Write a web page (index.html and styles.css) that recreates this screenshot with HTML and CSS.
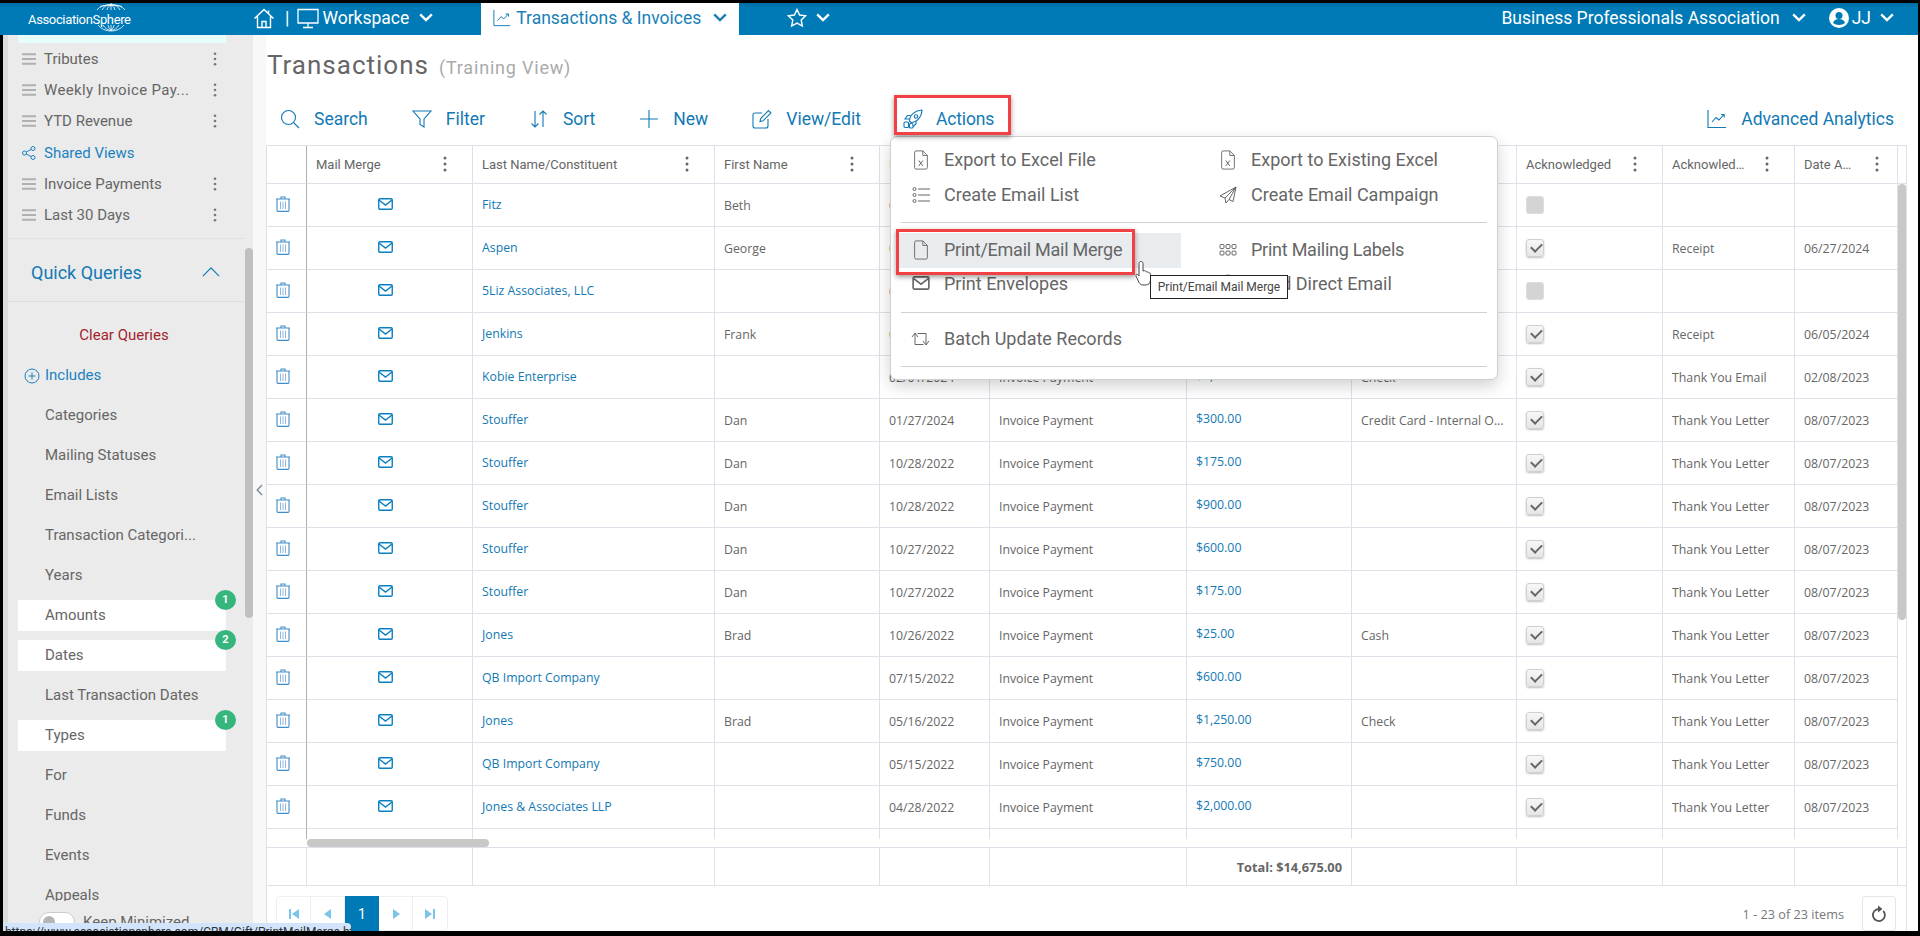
FILE: index.html
```html
<!DOCTYPE html>
<html lang="en">
<head>
<meta charset="utf-8">
<title>Transactions</title>
<link rel="stylesheet" href="styles.css">
</head>
<body>
<svg class="sprite" aria-hidden="true">
  <symbol id="i-trash" viewBox="0 0 14 16"><path d="M0 3h14M5 3V1h4V3M1 3v11.200c0 .6.4 1.200 1 1.200h10c.6 0 1-.6 1-1.200V3" fill="none" stroke="#3f8ecb" stroke-width="1.100"/><path d="M4.500 5.500v7.500M7 5.500v7.500M9.500 5.500v7.500" stroke="#8fb6dc" stroke-width="1"/></symbol>
  <symbol id="i-mail" viewBox="0 0 15 12"><rect x=".75" y=".75" width="13.5" height="10.5" rx="1.2" fill="none" stroke="currentColor" stroke-width="1.4"/><path d="M1 2l6.500 5L14 2" fill="none" stroke="currentColor" stroke-width="1.4"/></symbol>
  <symbol id="i-chev" viewBox="0 0 14 9"><path d="M1.200 1.400L7 7l5.800-5.600" fill="none" stroke="currentColor" stroke-width="2.400"/></symbol>
  <symbol id="i-chart" viewBox="0 0 20 20"><path d="M1 1v17.500h18" fill="none" stroke="currentColor" stroke-width="1.100"/><path d="M5 13l4-4.500 3 2.500 5-5.500M14 5.500h3.200v3" fill="none" stroke="currentColor" stroke-width="1.100"/></symbol>
  <symbol id="i-xls" viewBox="0 0 16 22"><path d="M1 2.500c0-.8.6-1.500 1.500-1.500H10l5 5v13.500c0 .8-.6 1.500-1.500 1.500h-11C1.600 21 1 20.300 1 19.500zM10 1v5h5" fill="none" stroke="#666" stroke-width="1"/><path d="M5.500 11.500l4.500 6M10 11.500l-4.500 6" stroke="#666" stroke-width="1.100"/></symbol>
  <symbol id="i-doc" viewBox="0 0 16 22"><path d="M1 2.500c0-.8.6-1.500 1.500-1.500H10l5 5v13.500c0 .8-.6 1.500-1.500 1.500h-11C1.600 21 1 20.300 1 19.500zM10 1v5h5" fill="none" stroke="#666" stroke-width="1"/></symbol>
  <symbol id="i-dots" viewBox="0 0 4 16"><circle cx="2" cy="2" r="1.500"/><circle cx="2" cy="8" r="1.500"/><circle cx="2" cy="14" r="1.500"/></symbol>
  <symbol id="i-burger" viewBox="0 0 14 12"><path d="M0 1.200h14M0 6h14M0 10.800h14" stroke="#b0b0b0" stroke-width="2"/></symbol>
  <symbol id="i-first" viewBox="0 0 12 12"><path d="M1 1h2v10H1zM11 1v10L4 6z"/></symbol>
  <symbol id="i-prev" viewBox="0 0 12 12"><path d="M9 1v10L2 6z"/></symbol>
  <symbol id="i-next" viewBox="0 0 12 12"><path d="M3 1v10l7-5z"/></symbol>
  <symbol id="i-last" viewBox="0 0 12 12"><path d="M1 1v10l7-5zM9 1h2v10H9z"/></symbol>
</svg>

<div class="frame">
  <header class="topbar">
    <div class="logo">
      <svg class="logo-globe" viewBox="0 0 38 30" aria-hidden="true"><g fill="none" stroke="#fff" stroke-width=".8"><path d="M5 8C9 1 29 1 33 8M10 8C13 1 25 1 28 8M15 8C16 2 22 2 23 8M19 1v7M8 4.500c6-2 16-2 22 0M6 23c6 8 20 8 26 0M11 23c4 7 12 7 16 0M16 23c1 6 5 6 6 0M19 23v6"/></g></svg>
      <span class="logo-text">AssociationSphere</span>
    </div>
    <svg class="ic-home" viewBox="0 0 22 22" aria-hidden="true"><path d="M1.500 11.500L11 2.500l9.500 9M15.500 3.500v3.500M4.500 9.500V20.500h13V9.500M9 20.500v-6h4v6" fill="none" stroke="#fff" stroke-width="1.400"/></svg>
    <span class="bar-sep">|</span>
    <svg class="ic-monitor" viewBox="0 0 22 22" aria-hidden="true"><path d="M1 2.500h20v13.500H1zM11 16v4M6 20.500h10" fill="none" stroke="#fff" stroke-width="1.300"/></svg>
    <span class="bar-label bar-work">Workspace</span>
    <svg class="chev chev-work"><use href="#i-chev"/></svg>
    <div class="tab">
      <svg class="tab-ic"><use href="#i-chart"/></svg>
      <span class="tab-label">Transactions &amp; Invoices</span>
      <svg class="chev chev-tab"><use href="#i-chev"/></svg>
    </div>
    <svg class="ic-star" viewBox="0 0 20 20" aria-hidden="true"><path d="M10 1.500l2.600 5.500 6 .8-4.400 4.200 1.100 6L10 15.100 4.700 18l1.100-6L1.400 7.800l6-.8z" fill="none" stroke="#fff" stroke-width="1.400"/></svg>
    <svg class="chev chev-star"><use href="#i-chev"/></svg>
    <span class="bar-label bar-org">Business Professionals Association</span>
    <svg class="chev chev-org"><use href="#i-chev"/></svg>
    <svg class="ic-user" viewBox="0 0 20 20" aria-hidden="true"><circle cx="10" cy="10" r="10" fill="#fff"/><circle cx="10" cy="7.500" r="3.500" fill="#007ab6"/><path d="M4 15c1-3 3-4 6-4s5 1 6 4c-3 2.500-9 2.500-12 0z" fill="#007ab6"/></svg>
    <span class="bar-label bar-jj">JJ</span>
    <svg class="chev chev-jj"><use href="#i-chev"/></svg>
  </header>

  <div class="main">
    <aside class="sidebar">
      <div class="side-body">
        <div class="view-current"></div>
        <div class="view"><svg class="burger"><use href="#i-burger"/></svg><span class="view-name">Tributes</span><svg class="kebab-s"><use href="#i-dots"/></svg></div>
        <div class="view"><svg class="burger"><use href="#i-burger"/></svg><span class="view-name view-wide">Weekly Invoice Pay...</span><svg class="kebab-s"><use href="#i-dots"/></svg></div>
        <div class="view"><svg class="burger"><use href="#i-burger"/></svg><span class="view-name">YTD Revenue</span><svg class="kebab-s"><use href="#i-dots"/></svg></div>
        <div class="view view-shared">
          <svg class="burger" viewBox="0 0 14 14" aria-hidden="true"><g fill="none" stroke="#1b82c0" stroke-width="1"><circle cx="2.500" cy="7" r="2"/><circle cx="11" cy="2.500" r="2"/><circle cx="11" cy="11.500" r="2"/><path d="M4.300 6l4.900-2.600M4.300 8l4.900 2.600"/></g></svg>
          <span class="view-name">Shared Views</span>
        </div>
        <div class="view"><svg class="burger"><use href="#i-burger"/></svg><span class="view-name">Invoice Payments</span><svg class="kebab-s"><use href="#i-dots"/></svg></div>
        <div class="view"><svg class="burger"><use href="#i-burger"/></svg><span class="view-name">Last 30 Days</span><svg class="kebab-s"><use href="#i-dots"/></svg></div>

        <div class="qq-head">
          <span class="qq-title">Quick Queries</span>
          <svg class="qq-chev" viewBox="0 0 20 11" aria-hidden="true"><path d="M1 10l9-9 9 9" fill="none" stroke="#0a7ab5" stroke-width="1.300"/></svg>
        </div>
        <div class="queries">
          <div class="q-clear">Clear Queries</div>
          <div class="q q-includes">
            <svg class="q-plus" viewBox="0 0 16 16" aria-hidden="true"><circle cx="8" cy="8" r="7" fill="none" stroke="#1b82c0" stroke-width="1"/><path d="M8 4.500v7M4.500 8h7" stroke="#1b82c0" stroke-width="1"/></svg>
            Includes
          </div>
          <div class="q">Categories</div>
          <div class="q">Mailing Statuses</div>
          <div class="q">Email Lists</div>
          <div class="q">Transaction Categori...</div>
          <div class="q">Years</div>
          <div class="q q-on">Amounts<span class="badge">1</span></div>
          <div class="q q-on">Dates<span class="badge">2</span></div>
          <div class="q">Last Transaction Dates</div>
          <div class="q q-on">Types<span class="badge">1</span></div>
          <div class="q">For</div>
          <div class="q">Funds</div>
          <div class="q">Events</div>
          <div class="q">Appeals</div>
        </div>
        <div class="keep"><span class="toggle"><span class="toggle-knob"></span></span><span>Keep Minimized</span></div>
      </div>
      <div class="side-rail"><div class="side-thumb"></div></div>
      <div class="side-gutter"><svg class="gutter-chev" viewBox="0 0 7 12" aria-hidden="true"><path d="M6 1L1.200 6 6 11" fill="none" stroke="#7d8a96" stroke-width="1.400"/></svg></div>
    </aside>

    <section class="content">
      <div class="title-row"><h1 class="title">Transactions</h1><span class="subtitle">(Training View)</span></div>

      <div class="toolbar">
        <div class="tool"><svg class="tool-ic" viewBox="0 0 20 20" aria-hidden="true"><circle cx="8.500" cy="8.500" r="7" fill="none" stroke="currentColor" stroke-width="1.100"/><path d="M13.500 13.500l5.500 5.500" stroke="currentColor" stroke-width="1.100"/></svg>Search</div>
        <div class="tool"><svg class="tool-ic" viewBox="0 0 20 20" aria-hidden="true"><path d="M1 2h18l-7 8v8l-4-2.500V10z" fill="none" stroke="currentColor" stroke-width="1.100"/></svg>Filter</div>
        <div class="tool"><svg class="tool-ic" viewBox="0 0 20 20" aria-hidden="true"><path d="M6 2v16M2.500 14.500L6 18l3.500-3.500M14 18V2M10.500 5.500L14 2l3.500 3.500" fill="none" stroke="currentColor" stroke-width="1.100"/></svg>Sort</div>
        <div class="tool"><svg class="tool-ic" viewBox="0 0 20 20" aria-hidden="true"><path d="M10 1v18M1 10h18" stroke="currentColor" stroke-width="1.100"/></svg>New</div>
        <div class="tool"><svg class="tool-ic" viewBox="0 0 20 20" aria-hidden="true"><path d="M10 4H3c-1 0-2 1-2 2v11c0 1 1 2 2 2h11c1 0 2-1 2-2v-7M8 12.500l.7-3L16.500 1.500l2.500 2.500-8 7.800z" fill="none" stroke="currentColor" stroke-width="1.100"/></svg>View/Edit</div>
        <div class="tool tool-actions"><svg class="tool-ic" viewBox="0 0 20 20" aria-hidden="true"><g fill="none" stroke="currentColor" stroke-width="1.100"><path d="M6.500 12C6.500 6 12 1.500 19 1c-.3 7-5 12.500-11 12.500z"/><circle cx="13" cy="7.500" r="1.700"/><path d="M7.500 6.500H4.500L2 10h5M13 12v3l-3 2.500"/><rect x="1" y="13" width="4.500" height="5.500" rx="1"/><rect x="6.500" y="14.500" width="3.500" height="4.500" rx="1"/></g></svg>Actions</div>
        <div class="tool tool-right"><svg class="tool-ic"><use href="#i-chart"/></svg>Advanced Analytics</div>
      </div>

      <div class="grid">
        <div class="grid-main">
          <table class="tbl">
            <colgroup><col class="c1"><col class="c2"><col class="c3"><col class="c4"><col class="c5"><col class="c6"><col class="c7"><col class="c8"><col class="c9"><col class="c10"><col class="c11"><col class="c12"></colgroup>
            <thead>
              <tr>
                <th class="frozen"></th>
                <th><div class="th"><span class="th-t">Mail Merge</span><svg class="kebab"><use href="#i-dots"/></svg></div></th>
                <th><div class="th"><span class="th-t">Last Name/Constituent</span><svg class="kebab"><use href="#i-dots"/></svg></div></th>
                <th><div class="th"><span class="th-t">First Name</span><svg class="kebab"><use href="#i-dots"/></svg></div></th>
                <th><div class="th"><span class="th-t">Date</span></div></th>
                <th></th><th></th><th></th>
                <th><div class="th"><span class="th-t">Acknowledged</span><svg class="kebab"><use href="#i-dots"/></svg></div></th>
                <th><div class="th"><span class="th-t">Acknowledged Type</span><svg class="kebab"><use href="#i-dots"/></svg></div></th>
                <th><div class="th th-last"><span class="th-t">Date Acknowledged</span><svg class="kebab"><use href="#i-dots"/></svg></div></th>
                <th class="gutter"></th>
              </tr>
            </thead>
            <tbody>
              <tr><td class="frozen ic"><svg class="trash"><use href="#i-trash"/></svg></td><td class="ic"><svg class="mail"><use href="#i-mail"/></svg></td><td class="lnk">Fitz</td><td>Beth</td><td>06/27/2024</td><td></td><td></td><td></td><td><span class="cb"></span></td><td></td><td></td><td class="blank"></td></tr>
              <tr><td class="frozen ic"><svg class="trash"><use href="#i-trash"/></svg></td><td class="ic"><svg class="mail"><use href="#i-mail"/></svg></td><td class="lnk">Aspen</td><td>George</td><td>06/27/2024</td><td></td><td></td><td></td><td><span class="cb cb-on"></span></td><td>Receipt</td><td>06/27/2024</td><td class="blank"></td></tr>
              <tr><td class="frozen ic"><svg class="trash"><use href="#i-trash"/></svg></td><td class="ic"><svg class="mail"><use href="#i-mail"/></svg></td><td class="lnk">5Liz Associates, LLC</td><td></td><td>06/05/2024</td><td></td><td></td><td></td><td><span class="cb"></span></td><td></td><td></td><td class="blank"></td></tr>
              <tr><td class="frozen ic"><svg class="trash"><use href="#i-trash"/></svg></td><td class="ic"><svg class="mail"><use href="#i-mail"/></svg></td><td class="lnk">Jenkins</td><td>Frank</td><td>06/05/2024</td><td></td><td></td><td></td><td><span class="cb cb-on"></span></td><td>Receipt</td><td>06/05/2024</td><td class="blank"></td></tr>
              <tr><td class="frozen ic"><svg class="trash"><use href="#i-trash"/></svg></td><td class="ic"><svg class="mail"><use href="#i-mail"/></svg></td><td class="lnk">Kobie Enterprise</td><td></td><td>02/01/2024</td><td>Invoice Payment</td><td class="amt">$1,000.00</td><td>Check</td><td><span class="cb cb-on"></span></td><td>Thank You Email</td><td>02/08/2023</td><td class="blank"></td></tr>
              <tr><td class="frozen ic"><svg class="trash"><use href="#i-trash"/></svg></td><td class="ic"><svg class="mail"><use href="#i-mail"/></svg></td><td class="lnk">Stouffer</td><td>Dan</td><td>01/27/2024</td><td>Invoice Payment</td><td class="amt">$300.00</td><td>Credit Card - Internal O...</td><td><span class="cb cb-on"></span></td><td>Thank You Letter</td><td>08/07/2023</td><td class="blank"></td></tr>
              <tr><td class="frozen ic"><svg class="trash"><use href="#i-trash"/></svg></td><td class="ic"><svg class="mail"><use href="#i-mail"/></svg></td><td class="lnk">Stouffer</td><td>Dan</td><td>10/28/2022</td><td>Invoice Payment</td><td class="amt">$175.00</td><td></td><td><span class="cb cb-on"></span></td><td>Thank You Letter</td><td>08/07/2023</td><td class="blank"></td></tr>
              <tr><td class="frozen ic"><svg class="trash"><use href="#i-trash"/></svg></td><td class="ic"><svg class="mail"><use href="#i-mail"/></svg></td><td class="lnk">Stouffer</td><td>Dan</td><td>10/28/2022</td><td>Invoice Payment</td><td class="amt">$900.00</td><td></td><td><span class="cb cb-on"></span></td><td>Thank You Letter</td><td>08/07/2023</td><td class="blank"></td></tr>
              <tr><td class="frozen ic"><svg class="trash"><use href="#i-trash"/></svg></td><td class="ic"><svg class="mail"><use href="#i-mail"/></svg></td><td class="lnk">Stouffer</td><td>Dan</td><td>10/27/2022</td><td>Invoice Payment</td><td class="amt">$600.00</td><td></td><td><span class="cb cb-on"></span></td><td>Thank You Letter</td><td>08/07/2023</td><td class="blank"></td></tr>
              <tr><td class="frozen ic"><svg class="trash"><use href="#i-trash"/></svg></td><td class="ic"><svg class="mail"><use href="#i-mail"/></svg></td><td class="lnk">Stouffer</td><td>Dan</td><td>10/27/2022</td><td>Invoice Payment</td><td class="amt">$175.00</td><td></td><td><span class="cb cb-on"></span></td><td>Thank You Letter</td><td>08/07/2023</td><td class="blank"></td></tr>
              <tr><td class="frozen ic"><svg class="trash"><use href="#i-trash"/></svg></td><td class="ic"><svg class="mail"><use href="#i-mail"/></svg></td><td class="lnk">Jones</td><td>Brad</td><td>10/26/2022</td><td>Invoice Payment</td><td class="amt">$25.00</td><td>Cash</td><td><span class="cb cb-on"></span></td><td>Thank You Letter</td><td>08/07/2023</td><td class="blank"></td></tr>
              <tr><td class="frozen ic"><svg class="trash"><use href="#i-trash"/></svg></td><td class="ic"><svg class="mail"><use href="#i-mail"/></svg></td><td class="lnk">QB Import Company</td><td></td><td>07/15/2022</td><td>Invoice Payment</td><td class="amt">$600.00</td><td></td><td><span class="cb cb-on"></span></td><td>Thank You Letter</td><td>08/07/2023</td><td class="blank"></td></tr>
              <tr><td class="frozen ic"><svg class="trash"><use href="#i-trash"/></svg></td><td class="ic"><svg class="mail"><use href="#i-mail"/></svg></td><td class="lnk">Jones</td><td>Brad</td><td>05/16/2022</td><td>Invoice Payment</td><td class="amt">$1,250.00</td><td>Check</td><td><span class="cb cb-on"></span></td><td>Thank You Letter</td><td>08/07/2023</td><td class="blank"></td></tr>
              <tr><td class="frozen ic"><svg class="trash"><use href="#i-trash"/></svg></td><td class="ic"><svg class="mail"><use href="#i-mail"/></svg></td><td class="lnk">QB Import Company</td><td></td><td>05/15/2022</td><td>Invoice Payment</td><td class="amt">$750.00</td><td></td><td><span class="cb cb-on"></span></td><td>Thank You Letter</td><td>08/07/2023</td><td class="blank"></td></tr>
              <tr><td class="frozen ic"><svg class="trash"><use href="#i-trash"/></svg></td><td class="ic"><svg class="mail"><use href="#i-mail"/></svg></td><td class="lnk">Jones &amp; Associates LLP</td><td></td><td>04/28/2022</td><td>Invoice Payment</td><td class="amt">$2,000.00</td><td></td><td><span class="cb cb-on"></span></td><td>Thank You Letter</td><td>08/07/2023</td><td class="blank"></td></tr>
              <tr><td class="frozen"></td><td></td><td></td><td></td><td></td><td></td><td></td><td></td><td></td><td></td><td></td><td class="blank"></td></tr>
            </tbody>
          </table>
          <div class="vthumb"></div>
        </div>
        <div class="hscroll"><div class="hthumb"></div></div>
        <table class="tbl tbl-foot">
          <colgroup><col class="c1"><col class="c2"><col class="c3"><col class="c4"><col class="c5"><col class="c6"><col class="c7"><col class="c8"><col class="c9"><col class="c10"><col class="c11"><col class="c12"></colgroup>
          <tr><td></td><td></td><td></td><td></td><td></td><td></td><td class="total">Total: $14,675.00</td><td></td><td></td><td></td><td></td><td class="gutter"></td></tr>
        </table>
        <div class="pager-row">
          <div class="pager">
            <span class="pg"><svg class="pg-ic"><use href="#i-first"/></svg></span>
            <span class="pg"><svg class="pg-ic"><use href="#i-prev"/></svg></span>
            <span class="pg pg-on">1</span>
            <span class="pg"><svg class="pg-ic"><use href="#i-next"/></svg></span>
            <span class="pg"><svg class="pg-ic"><use href="#i-last"/></svg></span>
          </div>
          <span class="pg-info">1 - 23 of 23 items</span>
          <span class="refresh"><svg class="refresh-ic" viewBox="0 0 16 20" aria-hidden="true"><path d="M12.200 6.800A6 6 0 1 1 8 5" fill="none" stroke="#555" stroke-width="1.800"/><path d="M7 1.500L11.500 5 7 8.500z" fill="#555"/></svg></span>
        </div>
      </div>

      <div class="menu">
        <div class="menu-sec">
          <div class="mi"><svg class="mi-ic"><use href="#i-xls"/></svg>Export to Excel File</div>
          <div class="mi"><svg class="mi-ic"><use href="#i-xls"/></svg>Export to Existing Excel</div>
          <div class="mi"><svg class="mi-ic" viewBox="0 0 18 18" aria-hidden="true"><g fill="none" stroke="#666" stroke-width="1"><circle cx="2.500" cy="3" r="1.500"/><circle cx="2.500" cy="9" r="1.500"/><circle cx="2.500" cy="15" r="1.500"/><path d="M6 3h12M6 9h12M6 15h12"/></g></svg>Create Email List</div>
          <div class="mi"><svg class="mi-ic" viewBox="0 0 18 18" aria-hidden="true"><path d="M17 1L1 10l5 2 1 5 3-3.500 4 2zM17 1L6 12M17 1L10 13.500" fill="none" stroke="#666" stroke-width="1"/></svg>Create Email Campaign</div>
        </div>
        <hr class="menu-rule">
        <div class="menu-sec menu-sec-b">
          <div class="mi mi-hover"><svg class="mi-ic"><use href="#i-doc"/></svg><span class="mi-tight">Print/Email Mail Merge</span></div>
          <div class="mi"><svg class="mi-ic" viewBox="0 0 18 18" aria-hidden="true"><g fill="none" stroke="#666" stroke-width="1"><rect x="1" y="3.500" width="4" height="4" rx="1"/><rect x="7" y="3.500" width="4" height="4" rx="1"/><rect x="13" y="3.500" width="4" height="4" rx="1"/><rect x="1" y="10" width="4" height="4" rx="1"/><rect x="7" y="10" width="4" height="4" rx="1"/><rect x="13" y="10" width="4" height="4" rx="1"/></g></svg><span class="mi-tight">Print Mailing Labels</span></div>
          <div class="mi"><svg class="mi-ic mi-mail"><use href="#i-mail"/></svg>Print Envelopes</div>
          <div class="mi"><svg class="mi-ic" viewBox="0 0 18 20" aria-hidden="true"><circle cx="9" cy="10" r="8" fill="none" stroke="#666" stroke-width="1"/></svg>Send Direct Email</div>
        </div>
        <hr class="menu-rule">
        <div class="menu-sec menu-sec-last">
          <div class="mi"><svg class="mi-ic mi-batch" viewBox="0 0 20 18" aria-hidden="true"><path d="M4.500 14.500V3.500M1.500 7L4.500 3l3 4M4.500 14.500H13M15.500 3.500V14.500M12.500 11l3 4 3-4M15.500 3.500H7" fill="none" stroke="#666" stroke-width="1"/></svg>Batch Update Records</div>
        </div>
        <hr class="menu-rule">
      </div>

      <div class="mark mark-actions"></div>
      <div class="mark mark-merge"></div>
      <svg class="cursor" viewBox="0 0 18 26" aria-hidden="true"><path d="M6 1.500c1 0 2 .8 2 2V11l1-.3c1-.2 1.600.2 2 1l.5.1c1-.2 1.600.2 2 1 1-.2 2 .4 2 1.500V20c0 3-2 5-5 5H8c-2 0-3-1-4-2.500L1 16c-.5-1 .2-2 1.500-1.500L4 16V3.500c0-1 1-2 2-2z" fill="#fff" stroke="#444" stroke-width="1"/></svg>
      <div class="tip">Print/Email Mail Merge</div>
    </section>
  </div>
  <div class="status"><span>https://www.associationsphere.com/CRM/Gift/PrintMailMerge.html</span></div>
</div>
</body>
</html>
```
FILE: styles.css
```css
* { box-sizing: border-box; }
html, body { margin: 0; padding: 0; }
body { font-family: Roboto, "Liberation Sans", sans-serif; background: #000; color: #666; overflow: hidden; }
.sprite { position: absolute; width: 0; height: 0; }
.frame { position: relative; width: 1920px; height: 936px; padding: 3px 2px 5px 0; background: #000; display: flex; flex-direction: column; overflow: hidden; }

/* top bar */
.topbar { flex: none; height: 32px; display: flex; align-items: center; padding: 0 24px 3px 28px; background: linear-gradient(#006ea6, #007ab6 5px); color: #fff; font-size: 17.500px; }
.logo { position: relative; width: 102px; flex: none; }
.logo-globe { position: absolute; left: 64px; top: -6px; width: 38px; height: 30px; }
.logo-text { position: relative; font-size: 13px; letter-spacing: -.35px; white-space: nowrap; }
.ic-home { width: 22px; height: 22px; margin-left: 123px; flex: none; }
.bar-sep { margin-left: 10px; font-size: 18px; }
.ic-monitor { width: 22px; height: 22px; margin-left: 8px; flex: none; }
.bar-label { white-space: nowrap; }
.bar-work { margin-left: 3px; }
.chev { width: 14px; height: 9px; flex: none; color: #fff; }
.chev-work { margin-left: 10px; }
.tab { flex: none; align-self: flex-start; width: 258px; height: 32px; margin-left: 48px; padding: 0 0 3px 12px; display: flex; align-items: center; background: #fff; color: #1a7fb8; }
.tab-ic { width: 18px; height: 18px; flex: none; }
.tab-label { margin-left: 5px; white-space: nowrap; }
.chev-tab { margin-left: 12px; color: #1a7fb8; }
.ic-star { width: 20px; height: 20px; margin-left: 48px; flex: none; }
.chev-star { margin-left: 9px; }
.bar-org { margin-left: auto; }
.chev-org { margin-left: 12px; }
.ic-user { width: 20px; height: 20px; margin-left: 23px; flex: none; }
.bar-jj { margin-left: 3px; }
.chev-jj { margin-left: 9px; }

/* main */
.main { flex: 1; min-height: 0; display: flex; margin-left: 3px; }
.sidebar { flex: none; width: 263px; display: flex; }
.side-body { width: 242px; border-left: 5px solid #dcdcdc; background: #ebebeb; display: flex; flex-direction: column; overflow: hidden; font-size: 15px; }
.side-rail { width: 8px; background: #ebebeb; }
.side-thumb { width: 8px; height: 370px; margin-top: 213px; border-radius: 4px; background: #c0c0c0; }
.side-gutter { width: 13px; background: #f8f8f8; display: flex; justify-content: center; padding-top: 449px; }
.gutter-chev { width: 7px; height: 12px; }

.view-current { flex: none; width: 208px; height: 8px; margin-left: 10px; background: #e6fdfd; }
.view { flex: none; height: 31.300px; display: flex; align-items: center; padding-left: 14px; position: relative; }
.burger { width: 14px; height: 12px; flex: none; }
.view-name { margin-left: 8px; white-space: nowrap; }
.view-wide { letter-spacing: .35px; }
.view-shared { color: #1b82c0; }
.view-shared .burger { height: 14px; }
.kebab-s { width: 4px; height: 14px; position: absolute; left: 205px; fill: #777; }
.qq-head { flex: none; height: 64px; margin-top: 7px; padding: 5px 25px 0 23px; border-top: 1px solid #e0e0e0; border-bottom: 1px solid #dfdfdf; display: flex; align-items: center; justify-content: space-between; color: #1279b4; font-size: 18px; }
.qq-chev { width: 18px; height: 10px; }
.queries { flex: 1; min-height: 0; overflow: hidden; display: flex; flex-direction: column; }
.q-clear { flex: none; height: 40px; margin-top: 13px; line-height: 40px; text-align: center; color: #a3232b; width: 232px; }
.q { flex: none; position: relative; width: 208px; height: 31px; margin: 5px 0 4px 10px; padding-left: 27px; line-height: 31px; white-space: nowrap; }
.q-includes { color: #1b82c0; }
.q-plus { position: absolute; left: 6px; top: 8px; width: 16px; height: 16px; }
.q-on { background: #fff; }
.badge { position: absolute; right: -10px; top: -10px; width: 21px; height: 20px; border-radius: 50%; background: #36b57c; color: #fff; font-size: 11px; font-weight: 700; line-height: 20px; text-align: center; padding: 0; }
.keep { flex: none; height: 30px; padding: 11px 0 0 31px; display: flex; align-items: flex-start; gap: 8px; font-size: 15px; line-height: 20px; white-space: nowrap; }
.toggle { width: 36px; height: 20px; border: 1px solid #ccc; border-radius: 10px; background: #fff; flex: none; padding: 3px; }
.toggle-knob { display: block; width: 12px; height: 12px; border-radius: 50%; background: #b5b5b5; }

/* content */
.content { position: relative; flex: 1; min-width: 0; background: #fff; display: flex; flex-direction: column; padding-right: 11px; }
.title-row { flex: none; height: 60px; display: flex; align-items: center; padding-left: 1px; }
.title { margin: 0; font-size: 26px; font-weight: 400; letter-spacing: 1px; color: #666; }
.subtitle { margin-left: 10px; margin-top: 5px; font-size: 18px; letter-spacing: .8px; color: #aaa; }
.toolbar { flex: none; height: 50px; padding: 0 13px 2px 14px; display: flex; align-items: center; gap: 44px; color: #1279b4; font-size: 17.500px; }
.tool { display: flex; align-items: center; gap: 14px; white-space: nowrap; }
.tool-actions { margin-left: -2px; gap: 13px; letter-spacing: -.15px; }
.tool-right { margin-left: auto; }
.tool-ic { width: 20px; height: 20px; flex: none; }

/* grid */
.grid { flex: 1; min-height: 0; width: 1641px; border: 1px solid #dfe1e8; border-bottom: 0; display: flex; flex-direction: column; }
.grid-main { position: relative; flex: none; height: 693px; overflow: hidden; }
.tbl { table-layout: fixed; width: 1640px; border-collapse: separate; border-spacing: 0; font-family: "Open Sans", "Liberation Sans", sans-serif; font-size: 12.300px; color: #666; }
.c1 { width: 40px; } .c2 { width: 166px; } .c3 { width: 242px; } .c4 { width: 165px; } .c5 { width: 110px; } .c6 { width: 197px; } .c7 { width: 165px; } .c8 { width: 165px; } .c9 { width: 146px; } .c10 { width: 132px; } .c11 { width: 103px; } .c12 { width: 9px; }
.tbl th, .tbl td { border-right: 1px solid #dfe1e8; border-bottom: 1px solid #dfe1e8; padding: 0 9px; text-align: left; white-space: nowrap; overflow: hidden; }
.tbl th { height: 38px; font-family: Roboto, sans-serif; font-size: 13px; font-weight: 400; }
.tbl td { height: 43px; }
.tbl th.frozen, .tbl td.frozen { border-right-color: #aeb0b4; }
.tbl td.blank { border: 0; }
.tbl .gutter { padding: 0; border-right: 0; }
.th { display: flex; align-items: center; }
.th-t { flex: 1; min-width: 0; overflow: hidden; text-overflow: ellipsis; padding-right: 16px; }
.kebab { width: 4px; height: 16px; flex: none; margin-right: 16px; fill: #666; margin-top: -2px; }
.th-last .kebab { margin-right: 9px; }
.th-last .th-t { padding-right: 22px; }
.tbl td.ic { text-align: center; padding: 0 8px 0 0; line-height: 0; }
.tbl td.frozen.ic { text-align: left; padding: 0 0 2px 9px; }
.trash { width: 14px; height: 16px; color: #3f8ecb; }
.mail { width: 15px; height: 12px; color: #0a7fc1; margin-top: -3px; }
.lnk, .amt { color: #1279b4; }
.tbl td.lnk { padding-bottom: 2px; }
.tbl td.amt { padding-bottom: 3px; }
.cb { display: block; width: 18px; height: 18px; border-radius: 3px; background: #d4d4d4; border: 1px solid #dcdcdc; }
.cb-on { position: relative; background: linear-gradient(#f7f7f7, #e6e6e6); border-color: #d0d0d0; box-shadow: 0 1px 2px rgba(0,0,0,.25); }
.cb-on::after { content: ""; position: absolute; left: 4px; top: 3px; width: 9px; height: 5px; border-left: 2px solid #666; border-bottom: 2px solid #666; transform: rotate(-45deg); }
.vthumb { position: absolute; right: 0; top: 38px; width: 8px; height: 436px; border-radius: 4px; background: #c8c8c8; }
.hscroll { flex: none; height: 8px; padding-left: 40px; }
.hthumb { width: 182px; height: 8px; border-radius: 4px; background: #c8c8c8; }
.tbl-foot { flex: none; border-top: 1px solid #dfe1e8; }
.tbl-foot td { height: 38px; }
.tbl-foot .total { text-align: right; font-weight: 700; font-size: 12.800px; }
.pager-row { flex: 1; display: flex; align-items: flex-start; padding: 10px 10px 0 9px; }
.pager { display: flex; height: 35px; border: 1px solid #eceef2; border-radius: 4px; }
.pg { width: 34px; height: 35px; margin-top: -1px; display: flex; align-items: center; justify-content: center; border-right: 1px solid #eceef2; fill: #7cc5ea; }
.pg:last-child { border-right: 0; }
.pg-on { background: #007ab6; color: #fff; font-size: 14px; border-right: 0; }
.pg-ic { width: 12px; height: 12px; }
.pg-info { margin-left: auto; margin-top: 9px; font-family: "Open Sans", sans-serif; font-size: 12.700px; color: #777; }
.refresh { width: 34px; height: 35px; margin-left: 18px; display: flex; align-items: center; justify-content: center; border: 1px solid #e6e6e6; border-radius: 3px; }
.refresh-ic { width: 16px; height: 20px; }

/* dropdown menu */
.menu { position: absolute; z-index: 5; left: 624px; top: 101px; width: 608px; height: 244px; background: #fff; border: 1px solid #cfcfcf; border-radius: 7px; box-shadow: 0 6px 16px rgba(0,0,0,.18); padding-top: 5px; font-size: 18px; color: #666; }
.menu-sec { display: grid; grid-template-columns: 283px 1fr; column-gap: 24px; padding-left: 7px; margin-bottom: 10px; }
.menu-sec-b { grid-template-rows: 35px 32px; margin-bottom: 12px; }
.menu-sec-b .mi { height: auto; padding-bottom: 2px; }
.menu-sec-last { margin-top: -2px; }
.mi { height: 35px; padding-left: 14px; display: flex; align-items: center; gap: 14px; white-space: nowrap; }
.mi-hover { background: #e9ecef; }
.mi-tight { letter-spacing: -.25px; }
.mi-ic { width: 18px; height: 20px; flex: none; }
.mi-mail { color: #666; height: 14px; }
.mi-batch { width: 21px; height: 18px; margin: 0 -1px 0 -2px; }
.menu-rule { width: 586px; height: 1px; margin: 0 0 10px 10px; border: 0; background: #d0d0d0; }

/* annotations */
.mark { position: absolute; z-index: 6; border: 3px solid #f24144; box-shadow: 0 2px 5px rgba(0,0,0,.4); }
.mark-actions { left: 628px; top: 60px; width: 117px; height: 40px; }
.mark-merge { left: 630px; top: 194px; width: 239px; height: 46px; }
.cursor { position: absolute; z-index: 7; left: 869px; top: 225px; width: 18px; height: 26px; }
.tip { position: absolute; z-index: 8; left: 884px; top: 240px; width: 138px; height: 24px; background: #fff; border: 1px solid #222; font-size: 12px; line-height: 22px; text-align: center; color: #444; white-space: nowrap; }
.status { position: absolute; z-index: 9; left: 3px; bottom: 5px; width: 348px; height: 8px; overflow: hidden; background: #d2e3fc; border-radius: 0 4px 0 0; padding-left: 2px; font-size: 12px; line-height: 19px; color: #333; white-space: nowrap; }
```
